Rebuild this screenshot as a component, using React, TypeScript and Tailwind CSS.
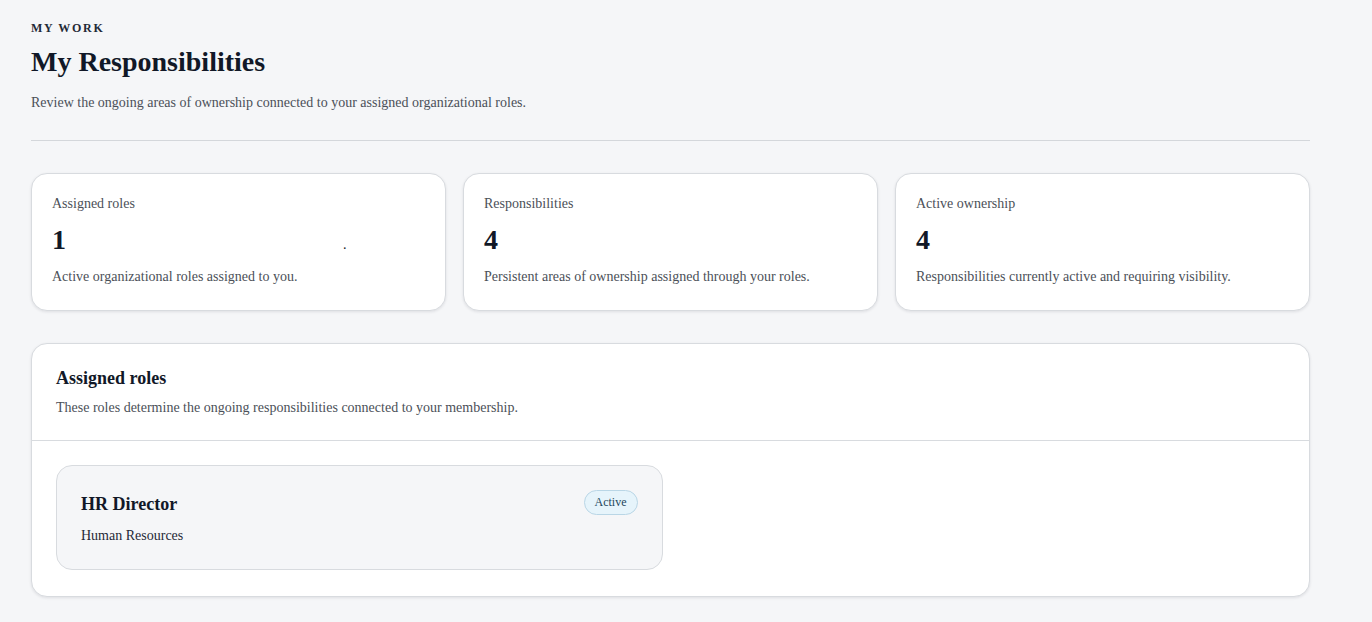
const stats = [
  { label: 'Assigned roles', value: '1', note: 'Active organizational roles assigned to you.' },
  { label: 'Responsibilities', value: '4', note: 'Persistent areas of ownership assigned through your roles.' },
  { label: 'Active ownership', value: '4', note: 'Responsibilities currently active and requiring visibility.' },
];

function StatCard({ label, value, note, dot }: { label: string; value: string; note: string; dot?: boolean }) {
  return (
    <div className="rounded-2xl border border-[#d8dbdf] bg-white px-[20px] pt-[21px] pb-[24px] shadow-[0_1px_3px_rgba(15,23,42,0.10)]">
      <p className="text-[14px] leading-[18px] text-[#4b5058]">{label}</p>
      <div className="mt-[9px] flex items-end">
        <span className="text-[28px] font-bold leading-[36px] text-[#111827]">{value}</span>
        {dot && <span className="mb-[6px] ml-[277px] text-[14px] leading-[14px] text-[#111827]">.</span>}
      </div>
      <p className="mt-[10px] text-[14px] leading-[18px] text-[#4b5058]">{note}</p>
    </div>
  );
}

export default function App() {
  return (
    <div className="min-h-screen bg-[#f5f6f8] font-['Liberation_Serif','Times_New_Roman',serif]">
      <div className="max-w-[1310px] pl-[31px] pt-[20px] pb-[26px]">
        {/* Page header */}
        <p className="text-[12px] font-bold uppercase leading-[16px] tracking-[0.14em] text-[#1f2a37]">My Work</p>
        <h1 className="mt-[9px] text-[28px] font-bold leading-[34px] text-[#111827]">My Responsibilities</h1>
        <p className="mt-[15px] text-[14px] leading-[18px] text-[#4b5058]">
          Review the ongoing areas of ownership connected to your assigned organizational roles.
        </p>
        <div className="mt-[28px] border-t border-[#d4d7db]" />

        {/* Stats */}
        <div className="mt-[32px] grid grid-cols-3 gap-[17px]">
          {stats.map((s, i) => (
            <StatCard key={s.label} {...s} dot={i === 0} />
          ))}
        </div>

        {/* Assigned roles panel */}
        <div className="mt-[32px] rounded-2xl border border-[#d8dbdf] bg-white shadow-[0_1px_3px_rgba(15,23,42,0.10)]">
          <div className="px-[24px] pt-[23px] pb-[23px]">
            <h2 className="text-[18px] font-bold leading-[22px] text-[#111827]">Assigned roles</h2>
            <p className="mt-[10px] text-[14px] leading-[18px] text-[#4b5058]">
              These roles determine the ongoing responsibilities connected to your membership.
            </p>
          </div>
          <div className="border-t border-[#d8dbdf]" />
          <div className="grid grid-cols-2 gap-4 px-[24px] pt-[24px] pb-[26px]">
            <div className="rounded-2xl border border-[#d8dbdf] bg-[#f5f6f8] px-[24px] pt-[24px] pb-[24px]">
              <div className="flex items-start justify-between">
                <h3 className="mt-[3px] text-[18px] font-bold leading-[22px] text-[#111827]">HR Director</h3>
                <span className="rounded-full border border-[#b9d6e6] bg-[#e6f4fb] px-[10px] py-[3px] text-[12px] leading-[17px] text-[#23475c]">
                  Active
                </span>
              </div>
              <p className="mt-[12px] text-[14px] leading-[18px] text-[#1f2937]">Human Resources</p>
            </div>
          </div>
        </div>
      </div>
    </div>
  );
}
